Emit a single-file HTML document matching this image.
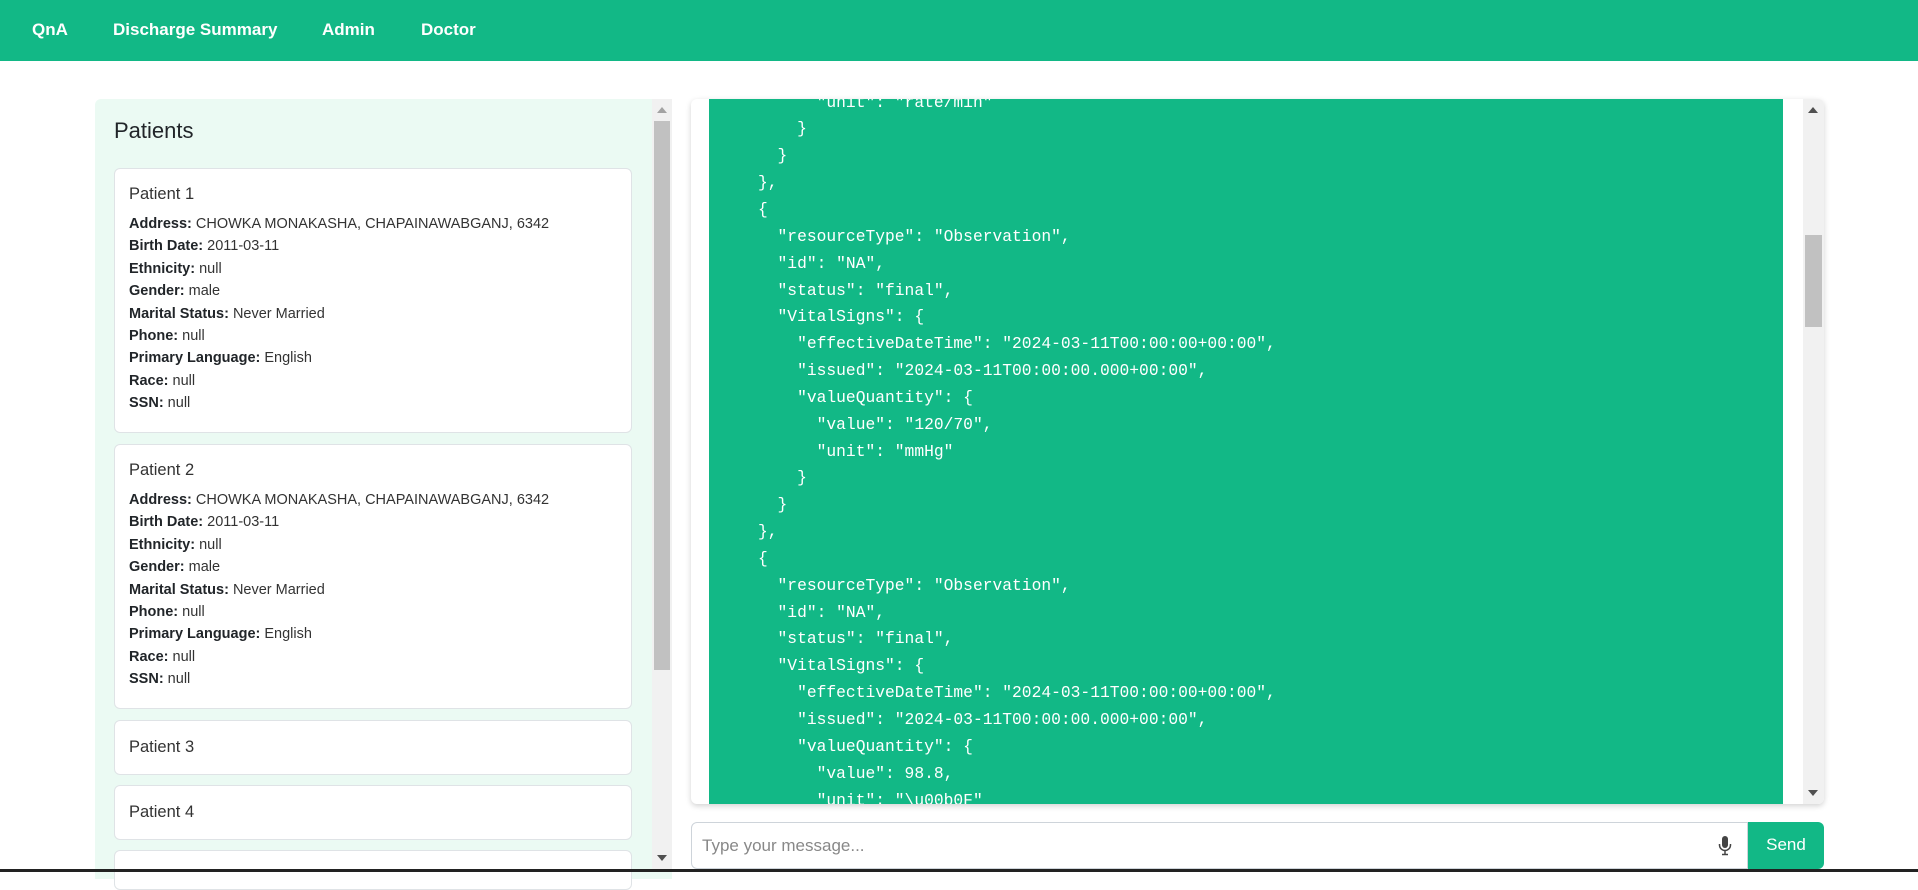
<!DOCTYPE html>
<html><head><meta charset="utf-8"><style>
*{box-sizing:border-box;margin:0;padding:0}
body{width:1918px;height:872px;overflow:hidden;background:#fff;font-family:"Liberation Sans",sans-serif;color:#212529;position:relative}
.nav{position:absolute;left:0;top:0;width:1918px;height:61px;background:#12b886}
.nav span{position:absolute;top:20px;color:#fff;font-weight:bold;font-size:17px}
.left{position:absolute;left:95px;top:99px;width:577px;height:780px;background:#ebfaf3;border-radius:6px 0 0 0;overflow:hidden}
.lsb{position:absolute;left:652px;top:99px;width:20px;height:770px;background:#f1f1f1}
.lsb .th{position:absolute;left:2px;top:22px;width:16px;height:549px;background:#c1c1c1}
.arr{position:absolute;width:0;height:0;border-left:5px solid transparent;border-right:5px solid transparent}
h2{position:absolute;left:114px;top:118px;font-size:22px;font-weight:normal}
.card{position:absolute;left:114px;width:518px;background:#fff;border:1px solid #dfe3e6;border-radius:6px;padding:14px 14px;font-size:14.5px}
.card .t{font-size:16.5px;margin-top:2px;margin-bottom:9px;color:#333}
.card div.l{height:22.4px;line-height:22.4px;color:#333}
.card b{color:#212529}
.chat{position:absolute;left:691px;top:99px;width:1133px;height:705px;background:#fff;border-radius:6px;box-shadow:0 2px 6px rgba(0,0,0,.18);overflow:hidden}
.green{position:absolute;left:18px;top:0;width:1074px;height:705px;background:#12b886;overflow:hidden}
pre{position:absolute;left:49px;top:-9.4px;font-family:"Liberation Mono",monospace;font-size:16.3px;line-height:26.85px;color:#fff}
.rsb{position:absolute;right:0;top:0;width:21px;height:705px;background:#f1f1f1}
.rsb .th{position:absolute;left:2px;top:136px;width:17px;height:92px;background:#c1c1c1}
.inp{position:absolute;left:691px;top:822px;width:1057px;height:47px;border:1px solid #ced4da;border-radius:6px 0 0 6px;background:#fff}
.inp span{position:absolute;left:10px;top:13px;font-size:17px;color:#888}
.send{position:absolute;left:1748px;top:822px;width:76px;height:47px;background:#12b886;border-radius:0 6px 6px 0;color:#fff;font-size:17px;text-align:center;line-height:46px}
.bar{position:absolute;left:0;top:869px;width:1918px;height:3px;background:#222}
</style></head><body>
<div class="nav"><span style="left:32px">QnA</span><span style="left:113px">Discharge Summary</span><span style="left:322px">Admin</span><span style="left:421px">Doctor</span></div>
<div class="left"></div>
<h2>Patients</h2>
<div class="card" style="top:168px;height:265px"><div class="t">Patient 1</div>
<div class="l"><b>Address:</b> CHOWKA MONAKASHA, CHAPAINAWABGANJ, 6342</div>
<div class="l"><b>Birth Date:</b> 2011-03-11</div><div class="l"><b>Ethnicity:</b> null</div><div class="l"><b>Gender:</b> male</div><div class="l"><b>Marital Status:</b> Never Married</div><div class="l"><b>Phone:</b> null</div><div class="l"><b>Primary Language:</b> English</div><div class="l"><b>Race:</b> null</div><div class="l"><b>SSN:</b> null</div></div>
<div class="card" style="top:444px;height:265px"><div class="t">Patient 2</div>
<div class="l"><b>Address:</b> CHOWKA MONAKASHA, CHAPAINAWABGANJ, 6342</div>
<div class="l"><b>Birth Date:</b> 2011-03-11</div><div class="l"><b>Ethnicity:</b> null</div><div class="l"><b>Gender:</b> male</div><div class="l"><b>Marital Status:</b> Never Married</div><div class="l"><b>Phone:</b> null</div><div class="l"><b>Primary Language:</b> English</div><div class="l"><b>Race:</b> null</div><div class="l"><b>SSN:</b> null</div></div>
<div class="card" style="top:720px;height:55px;padding-top:15px"><div class="t">Patient 3</div></div>
<div class="card" style="top:785px;height:55px;padding-top:15px"><div class="t">Patient 4</div></div>
<div class="card" style="top:850px;height:40px"></div>
<div class="lsb"><div class="arr" style="left:5px;top:8px;border-bottom:6px solid #a3a3a3"></div><div class="th"></div><div class="arr" style="left:5px;top:756px;border-top:6px solid #505050"></div></div>
<div class="chat"><div class="green"><pre>      "unit": "rate/min"
    }
  }
},
{
  "resourceType": "Observation",
  "id": "NA",
  "status": "final",
  "VitalSigns": {
    "effectiveDateTime": "2024-03-11T00:00:00+00:00",
    "issued": "2024-03-11T00:00:00.000+00:00",
    "valueQuantity": {
      "value": "120/70",
      "unit": "mmHg"
    }
  }
},
{
  "resourceType": "Observation",
  "id": "NA",
  "status": "final",
  "VitalSigns": {
    "effectiveDateTime": "2024-03-11T00:00:00+00:00",
    "issued": "2024-03-11T00:00:00.000+00:00",
    "valueQuantity": {
      "value": 98.8,
      "unit": "\u00b0F"</pre></div>
<div class="rsb"><div class="arr" style="left:5px;top:8px;border-bottom:6px solid #505050"></div><div class="th"></div><div class="arr" style="left:5px;top:691px;border-top:6px solid #505050"></div></div></div>
<div class="inp"><span>Type your message...</span>
<svg style="position:absolute;left:1026px;top:13px" width="14" height="20" viewBox="0 0 14 20"><rect x="4" y="0" width="6" height="12" rx="3" fill="#444"/><path d="M1.5 8v1a5.5 5.5 0 0 0 11 0V8M7 14.5V18M4 18.5h6" stroke="#444" stroke-width="1.5" fill="none"/></svg></div>
<div class="send">Send</div>
<div class="bar"></div>
</body></html>
